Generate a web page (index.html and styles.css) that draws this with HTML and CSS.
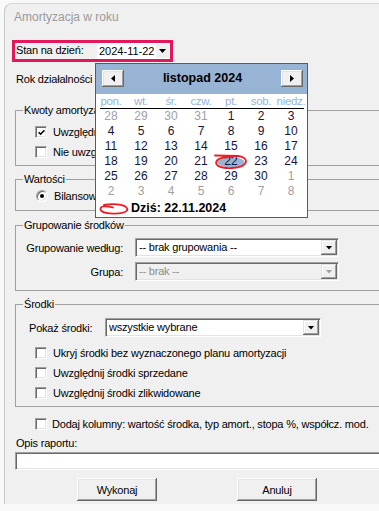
FILE: index.html
```html
<!DOCTYPE html>
<html lang="pl">
<head>
    <meta charset="UTF-8">
    <meta name="viewport" content="width=device-width, initial-scale=1.0">
    <title>Amortyzacja w roku</title>
    <link rel="stylesheet" href="styles.css">
</head>
<body>
    <div class="window">
        <div class="title">Amortyzacja w roku</div>

        <!-- Data stanu, zaznaczona ramką -->
        <div class="stan-box">
            <span class="stan-label">Stan na dzień:</span>
            <div class="date-field">
                <span class="date-text">2024-11-22</span>
                <span class="date-btn"><i class="tri-down"></i></span>
            </div>
        </div>

        <div class="rok-row">Rok działalności środka:</div>

        <div class="group kwoty">
            <div class="group-title">Kwoty amortyzacji</div>
            <div class="group-body">
                <div class="check-row">
                    <span class="check"><svg width="7" height="7" viewBox="0 0 7 7"><path d="M0.6 3.2 L2.6 5.2 L6.4 1.2" stroke="#000" stroke-width="1.6" fill="none"/></svg></span>
                    Uwzględnij odpisy
                </div>
                <div class="check-row">
                    <span class="check"></span>
                    Nie uwzględniaj
                </div>
            </div>
        </div>

        <div class="group wartosci">
            <div class="group-title">Wartości</div>
            <div class="group-body">
                <div class="radio-row"><span class="radio on"></span>Bilansowe</div>
            </div>
        </div>

        <div class="group grupowanie">
            <div class="group-title">Grupowanie środków</div>
            <div class="grid-rows">
                <span class="grid-label">Grupowanie według:</span>
                <div class="combo">
                    <span class="combo-text">-- brak grupowania --</span>
                    <span class="combo-btn"><i class="tri-down"></i></span>
                </div>
                <span class="grid-label">Grupa:</span>
                <div class="combo disabled">
                    <span class="combo-text">-- brak --</span>
                    <span class="combo-btn"><i class="tri-down"></i></span>
                </div>
            </div>
        </div>

        <div class="group srodki">
            <div class="group-title">Środki</div>
            <div class="pokaz-row">
                <span class="pokaz-label">Pokaż środki:</span>
                <div class="combo">
                    <span class="combo-text">wszystkie wybrane</span>
                    <span class="combo-btn"><i class="tri-down"></i></span>
                </div>
            </div>
            <div class="group-body">
                <div class="check-row"><span class="check"></span>Ukryj środki bez wyznaczonego planu amortyzacji</div>
                <div class="check-row"><span class="check"></span>Uwzględnij środki sprzedane</div>
                <div class="check-row"><span class="check"></span>Uwzględnij środki zlikwidowane</div>
            </div>
        </div>

        <div class="check-row dodaj"><span class="check"></span>Dodaj kolumny: wartość środka, typ amort., stopa %, współcz. mod.</div>

        <div class="opis-label">Opis raportu:</div>
        <div class="opis-input"></div>

        <div class="buttons">
            <button class="btn">Wykonaj</button>
            <button class="btn">Anuluj</button>
        </div>
    </div>

    <!-- Rozwinięty kalendarz -->
    <div class="calendar">
        <div class="cal-head">
            <span class="cal-btn"><i class="tri-left"></i></span>
            <span class="cal-title">listopad 2024</span>
            <span class="cal-btn"><i class="tri-right"></i></span>
        </div>
        <div class="cal-names">
            <span>pon.</span><span>wt.</span><span>śr.</span><span>czw.</span><span>pt.</span><span>sob.</span><span>niedz.</span>
        </div>
        <div class="cal-line"></div>
        <div class="cal-days">
            <span class="other">28</span><span class="other">29</span><span class="other">30</span><span class="other">31</span><span>1</span><span>2</span><span>3</span>
            <span>4</span><span>5</span><span>6</span><span>7</span><span>8</span><span>9</span><span>10</span>
            <span>11</span><span>12</span><span>13</span><span>14</span><span>15</span><span>16</span><span>17</span>
            <span>18</span><span>19</span><span>20</span><span>21</span><span class="sel">22</span><span>23</span><span>24</span>
            <span>25</span><span>26</span><span>27</span><span>28</span><span>29</span><span>30</span><span class="other">1</span>
            <span class="other">2</span><span class="other">3</span><span class="other">4</span><span class="other">5</span><span class="other">6</span><span class="other">7</span><span class="other">8</span>
        </div>
        <div class="cal-today">Dziś: 22.11.2024</div>
    </div>

    <!-- Odręczne czerwone zaznaczenia -->
    <svg class="marks" width="379" height="511" viewBox="0 0 379 511">
        <path d="M215 155.5 L238 156 C250 157.5 249 167 232 168 C219 168.5 213 164.5 217.5 160 C220 158 226 157 231 157.3" stroke="#ec1c24" stroke-width="1.8" fill="none" stroke-linecap="round"/>
        <path d="M113 207.5 C105 205.5 100 206 100.5 209.5 C101.5 214.5 123 215 127 210.5 C129.5 205.5 116 202.5 104 205" stroke="#ec1c24" stroke-width="1.8" fill="none" stroke-linecap="round"/>
    </svg>
</body>
</html>
```

FILE: styles.css
```css
body {
    box-sizing: border-box;
    position: relative;
    height: 511px;
    margin: 0;
    padding: 3px 0 0 4px;
    overflow: hidden;
    background: #f9f9f9;
    font-family: "Liberation Sans", Arial, sans-serif;
    font-size: 11px;
    letter-spacing: -0.2px;
    color: #000;
}

/* Okno raportu */
.window {
    box-sizing: border-box;
    width: 400px;
    height: 501px;
    background: #f0f0f0;
    border-top: 1px solid #d4d4d4;
    border-left: 1px solid #c8c8c8;
    border-top-left-radius: 8px;
}

.title {
    margin-top: 6px;
    padding-left: 9px;
    line-height: 14px;
    font-size: 12px;
    letter-spacing: 0;
    color: #9a9a9a;
}

.stan-box {
    box-sizing: border-box;
    display: flex;
    align-items: flex-start;
    width: 161px;
    margin: 16px 0 0 7px;
    border: 3px solid #e3175b;
}

.stan-label {
    width: 81px;
    padding-left: 1px;
    line-height: 14px;
}

.date-field {
    display: flex;
    align-items: center;
    width: 73px;
    height: 16px;
    background: #fff;
}

.date-text {
    flex: 1;
    padding-left: 2px;
    white-space: nowrap;
    font-size: 11px;
    letter-spacing: 0;
}

.date-btn {
    display: flex;
    align-items: center;
    justify-content: center;
    width: 13px;
    height: 14px;
    margin-right: 1px;
    background: #f0f0f0;
}

.rok-row {
    margin-top: 11px;
    padding-left: 11px;
    line-height: 13px;
}

/* Ramki grup */
.group {
    box-sizing: border-box;
    width: 370px;
    margin-left: 10px;
    border: 1px solid #a0a0a0;
}

.group-title {
    display: table;
    margin: -7px 0 0 7px;
    padding: 0 1px;
    line-height: 13px;
    background: #f0f0f0;
}

.kwoty {
    margin-top: 24px;
    padding-bottom: 3px;
}

.kwoty .group-body {
    margin-top: 5px;
}

.wartosci {
    margin-top: 13px;
    padding-bottom: 6px;
}

.wartosci .group-body {
    margin-top: 1px;
}

.grupowanie {
    margin-top: 14px;
    padding-bottom: 9px;
}

.srodki {
    margin-top: 13px;
    padding-bottom: 3px;
}

.srodki .group-body {
    margin-top: 6px;
}

.group-body {
    padding-left: 19px;
}

.check-row {
    display: flex;
    align-items: center;
    gap: 6px;
    height: 20px;
    white-space: nowrap;
}

.radio-row {
    display: flex;
    align-items: center;
    gap: 6px;
    height: 17px;
    padding-left: 1px;
}

.check {
    box-sizing: border-box;
    display: flex;
    align-items: center;
    justify-content: center;
    width: 12px;
    height: 12px;
    background: #fff;
    border: 1px solid;
    border-color: #a0a0a0 #fff #fff #a0a0a0;
    box-shadow: inset 1px 1px #696969, inset -1px -1px #e3e3e3;
}

.radio {
    box-sizing: border-box;
    position: relative;
    width: 12px;
    height: 12px;
    border-radius: 50%;
    background: #fff;
    border: 1px solid;
    border-color: #a0a0a0 #fff #fff #a0a0a0;
    box-shadow: inset 1px 1px #696969, inset -1px -1px #e3e3e3;
}

.radio.on::after {
    content: "";
    position: absolute;
    left: 3px;
    top: 3px;
    width: 4px;
    height: 4px;
    border-radius: 50%;
    background: #000;
}

.grid-rows {
    display: grid;
    grid-template-columns: 107px 204px;
    column-gap: 12px;
    row-gap: 5px;
    align-items: center;
    margin-top: 6px;
}

.grid-label {
    text-align: right;
}

.pokaz-row {
    display: flex;
    align-items: center;
    margin-top: 7px;
    padding-left: 13px;
}

.pokaz-label {
    width: 76px;
}

.pokaz-row .combo {
    width: 216px;
}

/* Listy rozwijane */
.combo {
    box-sizing: border-box;
    display: flex;
    align-items: center;
    height: 19px;
    padding: 1px;
    background: #fff;
    border: 1px solid;
    border-color: #a0a0a0 #fff #fff #a0a0a0;
    box-shadow: inset 1px 1px #696969, inset -1px -1px #e3e3e3;
}

.combo-text {
    flex: 1;
    padding-left: 2px;
    line-height: 15px;
}

.combo-btn {
    box-sizing: border-box;
    display: flex;
    align-items: center;
    justify-content: center;
    width: 16px;
    height: 15px;
    background: #f0f0f0;
    box-shadow: inset -1px -1px #696969, inset 1px 1px #e3e3e3, inset -2px -2px #a0a0a0, inset 2px 2px #fff;
}

.combo.disabled {
    background: #f0f0f0;
    color: #8c8c8c;
}

.combo.disabled .tri-down {
    background: #a0a0a0;
}

.tri-down {
    display: block;
    width: 7px;
    height: 4px;
    background: #000;
    clip-path: polygon(0 0, 100% 0, 50% 100%);
}

.tri-left,
.tri-right {
    display: block;
    width: 4px;
    height: 7px;
    background: #000;
}

.tri-left {
    clip-path: polygon(100% 0, 100% 100%, 0 50%);
}

.tri-right {
    clip-path: polygon(0 0, 0 100%, 100% 50%);
}

.dodaj {
    margin-top: 7px;
    padding-left: 30px;
    gap: 5px;
}

.opis-label {
    margin-top: 3px;
    padding-left: 11px;
    line-height: 13px;
}

.opis-input {
    box-sizing: border-box;
    width: 380px;
    height: 18px;
    margin: 2px 0 0 10px;
    background: #fff;
    border: 1px solid;
    border-color: #a0a0a0 #fff #fff #a0a0a0;
    box-shadow: inset 1px 1px #696969, inset -1px -1px #e3e3e3;
}

.buttons {
    display: flex;
    gap: 80px;
    margin-top: 8px;
    padding-left: 72px;
}

.btn {
    box-sizing: border-box;
    width: 80px;
    height: 23px;
    padding: 0;
    border: none;
    background: #f0f0f0;
    font: inherit;
    letter-spacing: inherit;
    color: #000;
    box-shadow: inset -1px -1px #696969, inset 1px 1px #fff, inset -2px -2px #a0a0a0, inset 2px 2px #e3e3e3;
}

/* Kalendarz */
.calendar {
    box-sizing: border-box;
    position: absolute;
    left: 95px;
    top: 63px;
    width: 213px;
    height: 155px;
    background: #fff;
    border: 1px solid #5b5b5b;
    font-size: 12px;
    letter-spacing: 0;
}

.cal-head {
    box-sizing: border-box;
    display: flex;
    align-items: flex-start;
    height: 30px;
    padding: 6px 4px 0 6px;
    background: #97b4d5;
}

.cal-btn {
    display: flex;
    align-items: center;
    justify-content: center;
    width: 22px;
    height: 17px;
    background: #f0f0f0;
    box-shadow: inset -1px -1px #696969, inset 1px 1px #fff, inset -2px -2px #a0a0a0, inset 2px 2px #e3e3e3;
}

.cal-title {
    flex: 1;
    text-align: center;
    font-weight: bold;
    font-size: 12.5px;
    line-height: 17px;
}

.cal-names,
.cal-days {
    display: grid;
    grid-template-columns: repeat(7, 30px);
    text-align: center;
}

.cal-names {
    height: 13px;
    margin-top: 1px;
    line-height: 13px;
    font-size: 11.5px;
    letter-spacing: -0.3px;
    color: #93b5dc;
}

.cal-line {
    height: 1px;
    margin: 0 3px 0 4px;
    background: #000;
}

.cal-days {
    grid-auto-rows: 15px;
    line-height: 15px;
    color: #16143c;
}

.cal-days .other {
    color: #a0a0a8;
}

.cal-days .sel {
    background: radial-gradient(14px 5px at 50% 55%, #98b4d4 94%, transparent 100%);
}

.cal-today {
    height: 18px;
    padding-left: 35px;
    line-height: 18px;
    font-weight: bold;
    font-size: 12.5px;
}

.marks {
    position: absolute;
    left: 0;
    top: 0;
    pointer-events: none;
}
```
